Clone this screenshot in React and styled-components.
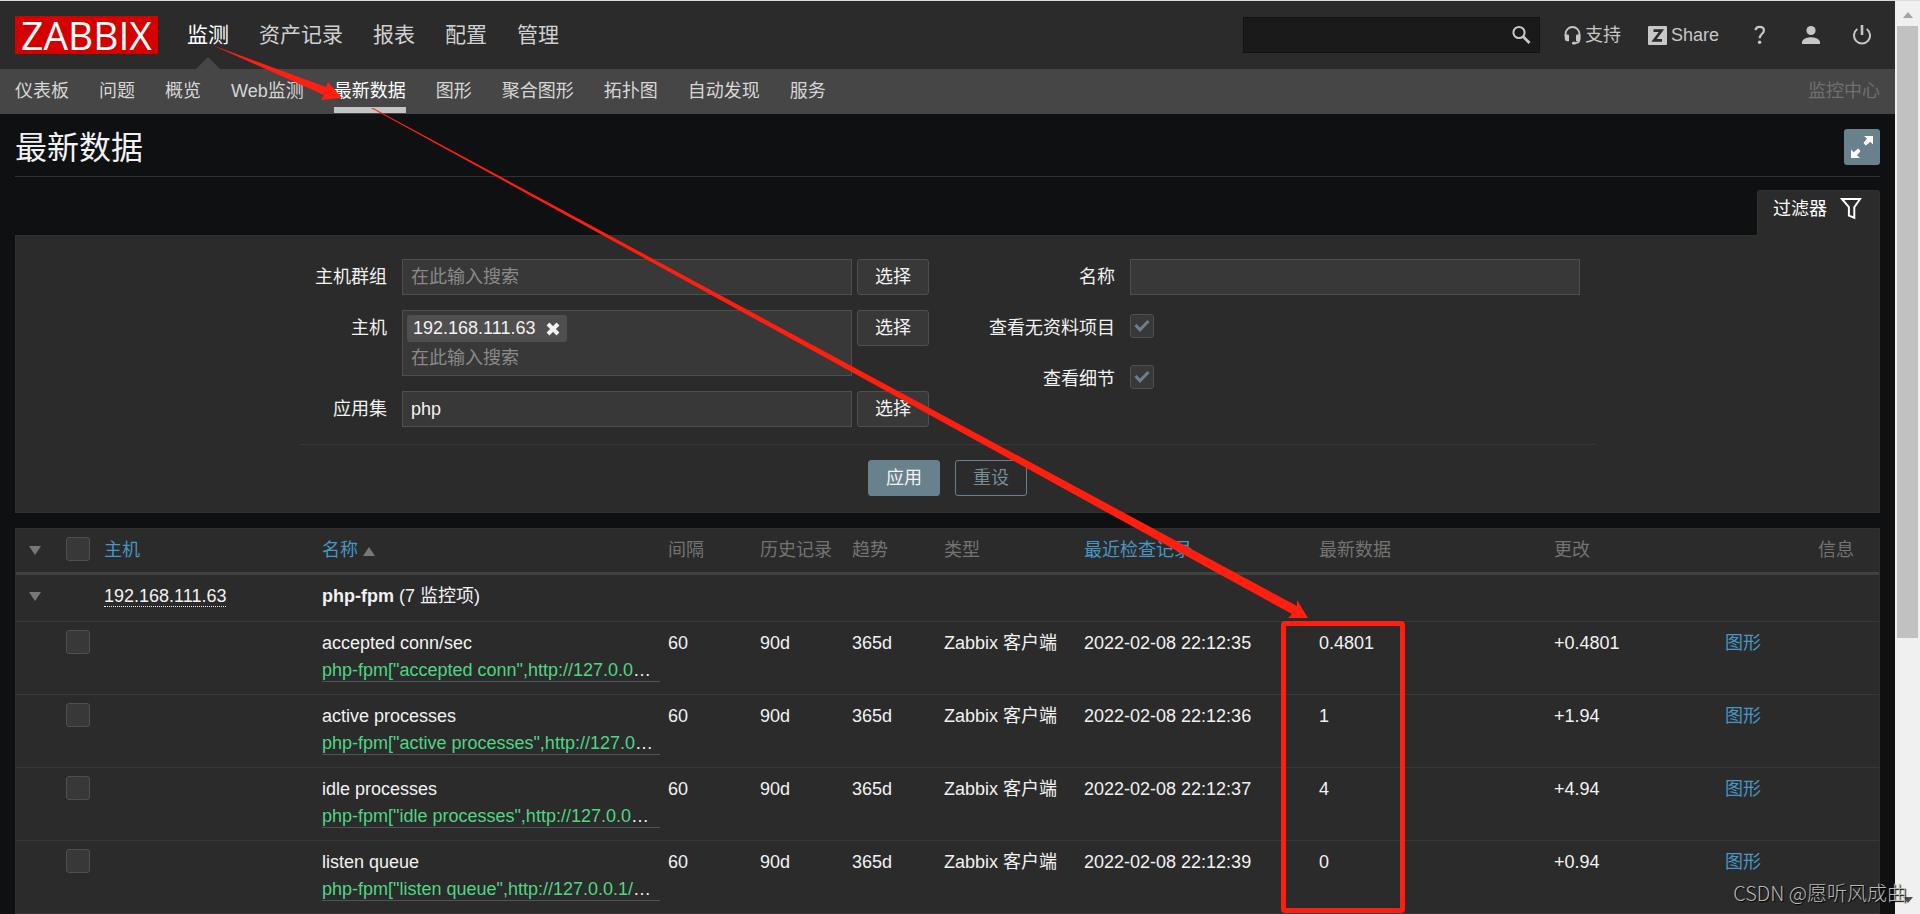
import React from 'react'
import styled, { createGlobalStyle } from 'styled-components'

const GlobalStyle = createGlobalStyle`
  *, *::before, *::after {
    box-sizing: border-box;
  }

  body {
    margin: 0;
    overflow: hidden;
    background: #0e1012;
    color: #f2f2f2;
    font-family: Arial, 'Liberation Sans', 'Noto Sans CJK SC', sans-serif;
    font-size: 18px;
    line-height: 27px;
  }

  button, input {
    font: inherit;
    color: inherit;
  }

  a {
    color: inherit;
    text-decoration: none;
  }
`

const Page = styled.div`
  position: relative;
  display: flex;
  height: 100vh;
  overflow: hidden;
  border-top: 1px solid #d9dcdb;
`

const Main = styled.div`
  flex: 1;
  min-width: 0;
`

/* header */

const TopBar = styled.header`
  display: flex;
  align-items: center;
  height: 68px;
  padding: 0 24px 0 15px;
  background: #2b2b2b;
`

const Logo = styled.a`
  display: flex;
  align-items: center;
  justify-content: center;
  width: 143px;
  height: 38px;
  background: #d40000;
  color: #fff;
  font-family: 'Open Sans', 'Noto Sans', sans-serif;
  font-size: 39px;
  line-height: 38px;
`

const Menu = styled.nav`
  display: flex;
  gap: 30px;
  margin-left: 29px;
  font-size: 21px;
`

const MenuLink = styled.a`
  position: relative;
  line-height: 68px;
  color: ${({ $active }) => ($active ? '#fff' : '#d0d0d0')};

  &::after {
    content: '';
    display: ${({ $active }) => ($active ? 'block' : 'none')};
    position: absolute;
    left: 50%;
    bottom: 0;
    margin-left: -12px;
    border: 12px solid transparent;
    border-top: 0;
    border-bottom-color: #464646;
  }
`

const SearchBox = styled.form`
  display: flex;
  align-items: center;
  width: 297px;
  height: 36px;
  margin-left: auto;
  margin-right: 24px;
  padding-right: 8px;
  background: #1a1a1a;
  border: 1px solid #131313;

  input {
    flex: 1;
    min-width: 0;
    height: 34px;
    padding: 0 8px;
    background: transparent;
    border: 0;
    outline: 0;
  }
`

const IconButton = styled.button`
  display: flex;
  padding: 0;
  background: none;
  border: 0;
  color: #c7c7c7;
`

const TextLinks = styled.div`
  display: flex;
  gap: 27px;
`

const TextLink = styled.a`
  display: flex;
  align-items: center;
  gap: 4px;
  color: #c7c7c7;
`

const IconLinks = styled.div`
  display: flex;
  gap: 33px;
  margin-left: 32px;
`

const SubBar = styled.div`
  display: flex;
  justify-content: space-between;
  padding: 0 15px;
  height: 45px;
  line-height: 45px;
  background: #464646;
  color: #707070;
`

const SubMenu = styled.nav`
  display: flex;
  gap: 30px;
`

const SubLink = styled.a`
  height: 44px;
  color: ${({ $active }) => ($active ? '#fff' : '#d6d6d6')};
  border-bottom: ${({ $active }) => ($active ? '6px solid #c4c4c4' : '0')};
`

/* title and filter */

const Content = styled.main`
  padding: 0 15px;
`

const TitleRow = styled.div`
  display: flex;
  justify-content: space-between;
  padding: 15px 0 8px;
  border-bottom: 1px solid #303030;

  h1 {
    margin: 0;
    font-size: 32px;
    font-weight: 400;
    line-height: 39px;
  }
`

const FullscreenButton = styled.button`
  display: flex;
  align-items: center;
  justify-content: center;
  width: 36px;
  height: 36px;
  padding: 0;
  background: #69808d;
  border: 0;
  border-radius: 3px;
  color: #fff;
`

const FilterTab = styled.button`
  position: relative;
  display: flex;
  gap: 13px;
  height: 46px;
  margin: 13px 0 -1px auto;
  padding: 5px 17px 0 15px;
  background: #2b2b2b;
  border: 1px solid #303030;
  border-bottom: 0;
  border-radius: 3px 3px 0 0;
  color: #fff;

  svg {
    margin-top: 1px;
  }
`

const FilterPanel = styled.form`
  padding: 23px 0 16px;
  background: #2b2b2b;
  border: 1px solid #303030;
`

const FilterForms = styled.div`
  display: flex;
  justify-content: space-between;
  width: 1295px;
  max-width: 100%;
  margin: 0 auto;
  padding: 0 15px 17px 0;
  border-bottom: 1px solid #383838;
`

const FormColumn = styled.div`
  display: flex;
  flex-direction: column;
  gap: 15px;
`

const FormRow = styled.div`
  display: grid;
  grid-template-columns: ${({ $label }) => $label}px 450px auto;
  align-items: start;

  > label {
    padding-right: 15px;
    line-height: 36px;
    text-align: right;
  }
`

const TextField = styled.input`
  width: 100%;
  height: 36px;
  padding: 0 8px;
  background: #383838;
  border: 1px solid #4f4f4f;
  border-radius: 0;
  outline: 0;
`

const MultiSelect = styled.div`
  background: #383838;
  border: 1px solid #4f4f4f;
  padding: ${({ $tagged }) => ($tagged ? '4px' : '0')} 0 0;

  input {
    display: block;
    width: 100%;
    height: ${({ $tagged }) => ($tagged ? 33 : 34)}px;
    padding: 0 8px;
    background: transparent;
    border: 0;
    outline: 0;
  }

  input::placeholder {
    color: #8a8a8a;
    opacity: 1;
  }
`

const Tag = styled.span`
  display: flex;
  align-items: center;
  gap: 11px;
  width: max-content;
  height: 27px;
  margin-left: 4px;
  padding: 0 7px 0 6px;
  background: #4f4f4f;
  border-radius: 3px;

  button {
    color: #f2f2f2;
  }
`

const Button = styled.button`
  width: 72px;
  height: 36px;
  padding: 0;
  background: ${({ $primary, $outline }) =>
    $primary ? '#69808d' : $outline ? 'transparent' : '#383838'};
  border: 1px solid ${({ $primary, $outline }) => ($primary || $outline ? '#69808d' : '#4f4f4f')};
  border-radius: 3px;
  color: ${({ $outline }) => ($outline ? '#768d99' : '#f2f2f2')};
`

const SelectButton = styled(Button)`
  margin-left: 5px;
`

const FilterButtons = styled.div`
  display: flex;
  justify-content: center;
  gap: 15px;
  margin-top: 15px;
`

const CheckBoxWrap = styled.span`
  display: grid;
  width: 24px;
  height: 24px;
  margin-top: ${({ $inForm }) => ($inForm ? 4 : 0)}px;
  margin-bottom: ${({ $inForm }) => ($inForm ? 8 : 0)}px;

  input,
  svg {
    grid-area: 1 / 1;
  }

  input {
    appearance: none;
    width: 24px;
    height: 24px;
    margin: 0;
    background: #383838;
    border: 1px solid #4f4f4f;
    border-radius: 3px;
  }

  svg {
    display: none;
    place-self: center;
    color: #69808d;
    pointer-events: none;
  }

  input:checked + svg {
    display: block;
  }
`

/* data table */

const DataTable = styled.table`
  width: 100%;
  margin-top: 15px;
  table-layout: fixed;
  border-collapse: separate;
  border-spacing: 0;
  background: #2b2b2b;
  border: 1px solid #303030;
  border-bottom: 0;

  th,
  td {
    padding: 8px 0 0 8px;
    vertical-align: top;
    text-align: left;
    white-space: nowrap;
    border-bottom: 1px solid #383838;
  }

  th {
    height: 46px;
    color: #737373;
    font-weight: 400;
    border-bottom: 3px solid #414141;
  }
`

const GroupRow = styled.tr`
  height: 47px;
`

const ItemRow = styled.tr`
  height: 73px;
`

const BlueLink = styled.a`
  color: #4796c4;
`

const HostLink = styled.a`
  border-bottom: 1px dotted #f2f2f2;
`

const ItemKey = styled.a`
  display: block;
  margin-top: 3px;
  line-height: 21px;
  border-bottom: 1px solid #4b565c;

  span {
    color: #4fd683;
  }
`

const Triangle = styled.span`
  display: inline-block;
  border: 6px solid transparent;
  ${({ $up }) => ($up ? 'border-top: 0; border-bottom: 9px' : 'border-bottom: 0; border-top: 9px')}
    solid #787878;
`

const SortTriangle = styled(Triangle)`
  margin-left: 5px;
`

const Toggle = styled.button`
  display: flex;
  align-items: center;
  height: 27px;
  padding: 0 5px;
  background: none;
  border: 0;
`

/* scroll bar */

const ScrollTrack = styled.div`
  display: flex;
  flex-direction: column;
  align-items: center;
  width: 25px;
  padding: 11px 0;
  background: #f0f0f0;
`

const ScrollThumb = styled.div`
  width: 21px;
  height: 612px;
  margin: 8px 0 auto;
  background: #c1c1c1;
`

const ScrollArrow = styled.span`
  border: 5px solid transparent;
  ${({ $up }) =>
    $up
      ? 'border-top: 0; border-bottom: 6px solid #a3a3a3;'
      : 'border-bottom: 0; border-top: 6px solid #505050;'}
`

/* marks drawn over the page */

const Arrows = styled.svg`
  position: absolute;
  top: -1px;
  left: 0;
  pointer-events: none;
`

const Highlight = styled.div`
  position: absolute;
  top: 620px;
  left: 1281px;
  width: 124px;
  height: 292px;
  border: 5px solid #ff1f10;
  border-radius: 4px;
  pointer-events: none;
`

const Watermark = styled.div`
  position: absolute;
  right: 13px;
  bottom: 8px;
  color: #b9b9b9;
  font-family: 'Noto Sans CJK SC', sans-serif;
  font-size: 20px;
  font-weight: 300;
  text-shadow: 1px 1px 1px #000;
`

const SearchIcon = () => (
  <svg width="20" height="20" viewBox="0 0 20 20" fill="none" stroke="currentColor">
    <circle cx="8" cy="7.5" r="5.6" strokeWidth="2" />
    <path d="M12 11.5l6.5 6.5" strokeWidth="2.8" />
  </svg>
)

const HeadsetIcon = () => (
  <svg width="17" height="19" viewBox="0 0 17 19" fill="currentColor">
    <path
      d="M1.5 10.5V8a7 7 0 0 1 14 0v5c0 2.6-1.6 4-4 4"
      fill="none"
      stroke="currentColor"
      strokeWidth="1.8"
    />
    <path d="M.8 8.5h2.8c.8 0 1.4.5 1.4 1.4v5.3H3.2c-1.5 0-2.4-1-2.4-2.4z" />
    <path d="M16.3 8.5h-2.9c-.8 0-1.4.5-1.4 1.4v5.3h1.9c1.5 0 2.4-1 2.4-2.4z" />
    <rect x="8" y="15.8" width="4" height="2.8" rx="1.4" />
  </svg>
)

const ShareIcon = () => (
  <svg width="19" height="19" viewBox="0 0 19 19">
    <rect width="19" height="19" rx="1" fill="#c7c7c7" />
    <path d="M5.500 4.600h8L6 14.400h8" fill="none" stroke="#2b2b2b" strokeWidth="2.6" />
  </svg>
)

const HelpIcon = () => (
  <svg width="18" height="20" viewBox="0 0 18 20">
    <path
      d="M4.500 5.200C4.800 3 6.300 1.900 8.700 1.900c2.500 0 4.200 1.400 4.200 3.500 0 3.300-4.200 3.600-4.200 7.900"
      fill="none"
      stroke="currentColor"
      strokeWidth="2.2"
    />
    <circle cx="8.600" cy="17.3" r="1.7" fill="currentColor" />
  </svg>
)

const UserIcon = () => (
  <svg width="18" height="20" viewBox="0 0 18 20" fill="currentColor">
    <circle cx="9" cy="5.5" r="4.6" />
    <path d="M0 19v-2.500C1.500 13.500 5 12.300 9 12.300s7.500 1.200 9 4.200V19z" />
  </svg>
)

const PowerIcon = () => (
  <svg width="18" height="20" viewBox="0 0 18 20" fill="none" stroke="currentColor">
    <path d="M4.300 4a8 8 0 1 0 9.400 0" strokeWidth="2" />
    <path d="M9 0v10" strokeWidth="2.6" />
  </svg>
)

const FullscreenIcon = () => (
  <svg width="22" height="22" viewBox="0 0 22 22" fill="currentColor">
    <path d="M13 0h9v8.500l-2.700-2.700-4.500 3.700-2.300-2.400 3.500-4.500z" />
    <path d="M9 22H0v-8.500l2.700 2.700 4.500-3.700 2.300 2.400L6 19.400z" />
  </svg>
)

const FunnelIcon = () => (
  <svg width="22" height="23" viewBox="0 0 22 23" fill="none" stroke="currentColor">
    <path d="M2 2h18l-5.700 8.200v10.600l-5.400-2.200v-8.400z" strokeWidth="2" />
  </svg>
)

const CloseIcon = () => (
  <svg width="14" height="14" viewBox="0 0 14 14" stroke="currentColor" strokeWidth="4">
    <path d="M2 2l10 10M12 2L2 12" />
  </svg>
)

const CheckBox = ({ inForm, ...props }) => (
  <CheckBoxWrap $inForm={inForm}>
    <input type="checkbox" {...props} />
    <svg width="16" height="12" viewBox="0 0 16 12" fill="none" stroke="currentColor">
      <path d="M1.500 5l4.500 4.800L14.500 1" strokeWidth="3" />
    </svg>
  </CheckBoxWrap>
)

const menu = ['监测', '资产记录', '报表', '配置', '管理']

const subMenu = [
  '仪表板',
  '问题',
  '概览',
  'Web监测',
  '最新数据',
  '图形',
  '聚合图形',
  '拓扑图',
  '自动发现',
  '服务'
]

const columns = [42, 38, 218, 346, 92, 92, 92, 140, 235, 235, 171, 93, 69]

const items = [
  {
    name: 'accepted conn/sec',
    itemKey: 'php-fpm["accepted conn",http://127.0.0',
    time: '22:12:35',
    value: '0.4801',
    change: '+0.4801'
  },
  {
    name: 'active processes',
    itemKey: 'php-fpm["active processes",http://127.0',
    time: '22:12:36',
    value: '1',
    change: '+1.94'
  },
  {
    name: 'idle processes',
    itemKey: 'php-fpm["idle processes",http://127.0.0',
    time: '22:12:37',
    value: '4',
    change: '+4.94'
  },
  {
    name: 'listen queue',
    itemKey: 'php-fpm["listen queue",http://127.0.0.1/',
    time: '22:12:39',
    value: '0',
    change: '+0.94'
  }
]

const Header = () => (
  <>
    <TopBar>
      <Logo href="#">ZABBIX</Logo>
      <Menu>
        {menu.map((name, i) => (
          <MenuLink key={name} href="#" $active={i === 0}>
            {name}
          </MenuLink>
        ))}
      </Menu>
      <SearchBox>
        <input type="text" aria-label="搜索" />
        <IconButton type="button" aria-label="搜索">
          <SearchIcon />
        </IconButton>
      </SearchBox>
      <TextLinks>
        <TextLink href="#">
          <HeadsetIcon />
          支持
        </TextLink>
        <TextLink href="#">
          <ShareIcon />
          Share
        </TextLink>
      </TextLinks>
      <IconLinks>
        <IconButton aria-label="帮助">
          <HelpIcon />
        </IconButton>
        <IconButton aria-label="用户">
          <UserIcon />
        </IconButton>
        <IconButton aria-label="退出">
          <PowerIcon />
        </IconButton>
      </IconLinks>
    </TopBar>
    <SubBar>
      <SubMenu>
        {subMenu.map(name => (
          <SubLink key={name} href="#" $active={name === '最新数据'}>
            {name}
          </SubLink>
        ))}
      </SubMenu>
      <span>监控中心</span>
    </SubBar>
  </>
)

const Filter = () => (
  <>
    <FilterTab type="button">
      过滤器
      <FunnelIcon />
    </FilterTab>
    <FilterPanel>
      <FilterForms>
        <FormColumn>
          <FormRow $label={102}>
            <label htmlFor="groups">主机群组</label>
            <MultiSelect>
              <input id="groups" type="text" placeholder="在此输入搜索" />
            </MultiSelect>
            <SelectButton type="button">选择</SelectButton>
          </FormRow>
          <FormRow $label={102}>
            <label htmlFor="hosts">主机</label>
            <MultiSelect $tagged>
              <Tag>
                192.168.111.63
                <IconButton type="button" aria-label="移除">
                  <CloseIcon />
                </IconButton>
              </Tag>
              <input id="hosts" type="text" placeholder="在此输入搜索" />
            </MultiSelect>
            <SelectButton type="button">选择</SelectButton>
          </FormRow>
          <FormRow $label={102}>
            <label htmlFor="application">应用集</label>
            <TextField id="application" type="text" defaultValue="php" />
            <SelectButton type="button">选择</SelectButton>
          </FormRow>
        </FormColumn>
        <FormColumn>
          <FormRow $label={141}>
            <label htmlFor="name">名称</label>
            <TextField id="name" type="text" />
          </FormRow>
          <FormRow $label={141}>
            <label htmlFor="without-data">查看无资料项目</label>
            <CheckBox id="without-data" inForm defaultChecked />
          </FormRow>
          <FormRow $label={141}>
            <label htmlFor="details">查看细节</label>
            <CheckBox id="details" inForm defaultChecked />
          </FormRow>
        </FormColumn>
      </FilterForms>
      <FilterButtons>
        <Button type="button" $primary>
          应用
        </Button>
        <Button type="button" $outline>
          重设
        </Button>
      </FilterButtons>
    </FilterPanel>
  </>
)

const Items = () => (
  <DataTable>
    <colgroup>
      {columns.map((width, i) => (
        <col key={i} width={width} />
      ))}
    </colgroup>
    <thead>
      <tr>
        <th>
          <Toggle aria-label="全部折叠">
            <Triangle />
          </Toggle>
        </th>
        <th>
          <CheckBox aria-label="全选" />
        </th>
        <th>
          <BlueLink href="#">主机</BlueLink>
        </th>
        <th>
          <BlueLink href="#">
            名称
            <SortTriangle $up />
          </BlueLink>
        </th>
        <th>间隔</th>
        <th>历史记录</th>
        <th>趋势</th>
        <th>类型</th>
        <th>
          <BlueLink href="#">最近检查记录</BlueLink>
        </th>
        <th>最新数据</th>
        <th>更改</th>
        <th></th>
        <th>信息</th>
      </tr>
    </thead>
    <tbody>
      <GroupRow>
        <td>
          <Toggle aria-label="折叠">
            <Triangle />
          </Toggle>
        </td>
        <td></td>
        <td>
          <HostLink href="#">192.168.111.63</HostLink>
        </td>
        <td colSpan={10}>
          <b>php-fpm</b> (7 监控项)
        </td>
      </GroupRow>
      {items.map(item => (
        <ItemRow key={item.name}>
          <td></td>
          <td>
            <CheckBox aria-label={item.name} />
          </td>
          <td></td>
          <td>
            {item.name}
            <ItemKey href="#">
              <span>{item.itemKey}</span>…
            </ItemKey>
          </td>
          <td>60</td>
          <td>90d</td>
          <td>365d</td>
          <td>Zabbix 客户端</td>
          <td>2022-02-08 {item.time}</td>
          <td>{item.value}</td>
          <td>{item.change}</td>
          <td>
            <BlueLink href="#">图形</BlueLink>
          </td>
          <td></td>
        </ItemRow>
      ))}
    </tbody>
  </DataTable>
)

export default function App() {
  return (
    <>
      <GlobalStyle />
      <Page>
        <Main>
          <Header />
          <Content>
            <TitleRow>
              <h1>最新数据</h1>
              <FullscreenButton aria-label="全屏">
                <FullscreenIcon />
              </FullscreenButton>
            </TitleRow>
            <Filter />
            <Items />
          </Content>
        </Main>
        <ScrollTrack>
          <ScrollArrow $up />
          <ScrollThumb />
          <ScrollArrow />
        </ScrollTrack>
        <Arrows width="1420" height="640" viewBox="0 0 1420 640" fill="#ff1f10">
          <path d="M212 45L326 87L328 82L342 98L321 100L324 95Z" />
          <path d="M371 108L373 108L1297 606L1297 600L1308 618L1288 618L1292 614Z" />
        </Arrows>
        <Highlight />
        <Watermark>CSDN @愿听风成曲</Watermark>
      </Page>
    </>
  )
}
